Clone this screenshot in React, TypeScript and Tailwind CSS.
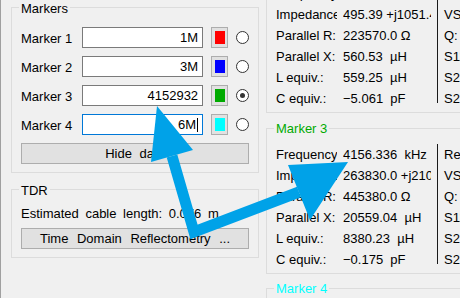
import React from 'react';

type MarkerRow = {
  label: string;
  value: string;
  swatch: string;
  checked?: boolean;
  focused?: boolean;
};

const markers: MarkerRow[] = [
  { label: 'Marker 1', value: '1M', swatch: 'bg-[#ff0000]' },
  { label: 'Marker 2', value: '3M', swatch: 'bg-[#0000ff]' },
  { label: 'Marker 3', value: '4152932', swatch: 'bg-[#00aa00]', checked: true },
  { label: 'Marker 4', value: '6M', swatch: 'bg-[#00ffff]', focused: true },
];

type Readout = { label: string; value: string; extra: string };

const marker2: Readout[] = [
  { label: 'Frequency:', value: '3000.000 kHz', extra: 'Return loss:' },
  { label: 'Impedance:', value: '495.39 +j1051.47 Ω', extra: 'VSWR:' },
  { label: 'Parallel R:', value: '223570.0 Ω', extra: 'Q:' },
  { label: 'Parallel X:', value: '560.53  µH', extra: 'S11 Phase:' },
  { label: 'L equiv.:', value: '559.25  µH', extra: 'S21 Gain:' },
  { label: 'C equiv.:', value: '−5.061  pF', extra: 'S21 Phase:' },
];

const marker3: Readout[] = [
  { label: 'Frequency:', value: '4156.336  kHz', extra: 'Return loss:' },
  { label: 'Impedance:', value: '263830.0 +j2104.1 Ω', extra: 'VSWR:' },
  { label: 'Parallel R:', value: '445380.0 Ω', extra: 'Q:' },
  { label: 'Parallel X:', value: '20559.04  µH', extra: 'S11 Phase:' },
  { label: 'L equiv.:', value: '8380.23  µH', extra: 'S21 Gain:' },
  { label: 'C equiv.:', value: '−0.175  pF', extra: 'S21 Phase:' },
];

const GroupTitle = ({ text, color = 'text-black', up = '-mt-[7px]' }: { text: string; color?: string; up?: string }) => (
  <div className={`${up} -ml-[2px] px-[2px] h-[15px] leading-[15px] w-fit bg-[#f0f0f0] ${color}`}>{text}</div>
);

const ReadoutTable = ({ rows }: { rows: Readout[] }) => (
  <div className="flex whitespace-pre">
    <div className="w-[61px] overflow-hidden">
      {rows.map((r) => (
        <div key={r.label} className="h-[21px] leading-[21px] pt-[1px]">{r.label}</div>
      ))}
    </div>
    <div className="ml-[6px] w-[88px] overflow-hidden">
      {rows.map((r) => (
        <div key={r.label} className="h-[21px] leading-[21px] pt-[1px]">{r.value}</div>
      ))}
    </div>
    <div className="ml-[6px] mt-[1px] w-px h-[120px] bg-[#1a1a1a]" />
    <div className="ml-[6px]">
      {rows.map((r) => (
        <div key={r.label} className="h-[21px] leading-[21px] pt-[1px]">{r.extra}</div>
      ))}
    </div>
  </div>
);

export default function App() {
  return (
    <div className="relative w-[460px] h-[298px] overflow-hidden bg-[#f0f0f0] flex text-[13px] text-black font-['Liberation_Sans',Arial,sans-serif]">
      {/* left column */}
      <div className="w-[259px] shrink-0 border-l border-[#a0a0a0] pl-[10px] pt-[7px]">
        <div className="w-[248px] border border-[#dcdcdc] px-[9px] pb-[8px]">
          <GroupTitle text="Markers" />
          <div className="mt-[11px] flex flex-col gap-[8px]">
            {markers.map((m) => (
              <div key={m.label} className="flex items-center h-[21px]">
                <span className="w-[61px] pt-[2px]">{m.label}</span>
                <div
                  className={`w-[122px] h-[21px] bg-white border flex items-center justify-end pr-[4px] pt-[1px] ${
                    m.focused ? 'border-[#0078d7]' : 'border-[#7a7a7a]'
                  }`}
                >
                  <span>{m.value}</span>
                  {m.focused && <span className="ml-px w-px h-[14px] bg-black" />}
                </div>
                <div className="ml-[8px] w-[17px] h-[21px] border border-[#adadad] bg-[#e1e1e1] flex items-center pl-[3px]">
                  <div className={`w-[10px] h-[13px] ${m.swatch}`} />
                </div>
                <div className="ml-[8px] w-[13px] h-[13px] rounded-full border border-[#333333] bg-white flex items-center justify-center">
                  {m.checked && <div className="w-[5px] h-[5px] rounded-full bg-[#333333]" />}
                </div>
              </div>
            ))}
          </div>
          <div className="mt-[8px] w-[228px] h-[21px] border border-[#adadad] bg-[#e1e1e1] flex items-center justify-center pt-[1px] [word-spacing:4px]">
            Hide data
          </div>
        </div>

        <div className="mt-[16px] w-[248px] border border-[#dcdcdc] px-[9px] pb-[8px]">
          <GroupTitle text="TDR" />
          <div className="mt-[8px] h-[16px] leading-[16px] whitespace-pre [word-spacing:3px]">Estimated cable length: 0.076 m</div>
          <div className="mt-[6px] w-[228px] h-[21px] border border-[#adadad] bg-[#e1e1e1] flex items-center justify-center pt-[1px] whitespace-pre [word-spacing:5px]">
            Time Domain Reflectometry ...
          </div>
        </div>
      </div>

      {/* right column: marker readouts */}
      <div className="ml-[7px] shrink-0 w-[300px]">
        <div className="-mt-[18px] border-x border-b border-[#dcdcdc] pl-[9px] pb-[4px]">
          <ReadoutTable rows={marker2} />
        </div>

        <div className="mt-[15px] border border-[#dcdcdc] pl-[9px] pb-[4px]">
          <GroupTitle text="Marker 3" color="text-[#00aa00]" up="-mt-[8px]" />
          <div className="mt-[7px]">
            <ReadoutTable rows={marker3} />
          </div>
        </div>

        <div className="mt-[14px] border border-[#dcdcdc] pl-[9px] h-[60px]">
          <GroupTitle text="Marker 4" color="text-[#00ffff]" up="-mt-[8px]" />
        </div>
      </div>

      {/* annotation arrows */}
      <svg width="460" height="298" className="absolute left-0 top-0 pointer-events-none">
        <polyline
          points="172,156 194,232 299,192"
          fill="none"
          stroke="#00a2e8"
          strokeWidth="11"
          strokeLinejoin="miter"
        />
        <polygon points="157,106 151,162 193,150" fill="#00a2e8" />
        <polygon points="348,162 288,165 310,220" fill="#00a2e8" />
      </svg>
    </div>
  );
}
